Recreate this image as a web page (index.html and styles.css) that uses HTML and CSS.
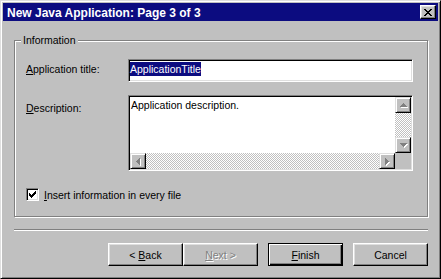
FILE: index.html
```html
<!DOCTYPE html>
<html>
<head>
<meta charset="utf-8">
<title>New Java Application</title>
<link rel="stylesheet" href="styles.css">
</head>
<body>
<div class="window">
  <div class="titlebar">
    <span class="title">New Java Application: Page 3 of 3</span>
    <span class="close-btn"><svg width="8" height="7" viewBox="0 0 8 7" shape-rendering="crispEdges"><path fill="#000" d="M0 0h2v1h-2zM6 0h2v1h-2zM1 1h2v1h-2zM5 1h2v1h-2zM2 2h4v1h-4zM3 3h2v1h-2zM2 4h4v1h-4zM1 5h2v1h-2zM5 5h2v1h-2zM0 6h2v1h-2zM6 6h2v1h-2z"/></svg></span>
  </div>
  <div class="dialog-body">
    <div class="group">
      <span class="group-label">Information</span>
      <div class="form-grid">
        <label class="field-label label-title"><u>A</u>pplication title:</label>
        <div class="edit"><span class="selection">ApplicationTitle</span></div>
        <label class="field-label label-desc"><u>D</u>escription:</label>
        <div class="memo">
          <div class="memo-text">Application description.</div>
          <div class="vscroll">
            <span class="sbtn"><svg width="7" height="4" viewBox="0 0 7 4" shape-rendering="crispEdges"><path fill="#808080" d="M3 0h1v1h-1zM2 1h3v1h-3zM1 2h5v1h-5zM0 3h7v1h-7z"/></svg></span>
            <span class="track"></span>
            <span class="sbtn"><svg width="7" height="4" viewBox="0 0 7 4" shape-rendering="crispEdges"><path fill="#808080" d="M0 0h7v1h-7zM1 1h5v1h-5zM2 2h3v1h-3zM3 3h1v1h-1z"/></svg></span>
          </div>
          <div class="hscroll">
            <span class="sbtn"><svg width="4" height="7" viewBox="0 0 4 7" shape-rendering="crispEdges"><path fill="#808080" d="M3 0h1v7h-1zM2 1h1v5h-1zM1 2h1v3h-1zM0 3h1v1h-1z"/></svg></span>
            <span class="track"></span>
            <span class="sbtn"><svg width="4" height="7" viewBox="0 0 4 7" shape-rendering="crispEdges"><path fill="#808080" d="M0 0h1v7h-1zM1 1h1v5h-1zM2 2h1v3h-1zM3 3h1v1h-1z"/></svg></span>
          </div>
          <div class="corner"></div>
        </div>
      </div>
      <div class="check-row">
        <span class="checkbox"><svg width="7" height="7" viewBox="0 0 7 7" shape-rendering="crispEdges"><path fill="#000" d="M0 2h1v3h-1zM1 3h1v3h-1zM2 4h1v3h-1zM3 3h1v3h-1zM4 2h1v3h-1zM5 1h1v3h-1zM6 0h1v3h-1z"/></svg></span>
        <span class="check-label"><u>I</u>nsert information in every file</span>
      </div>
    </div>
    <div class="separator"></div>
    <div class="buttons">
      <div class="nav-pair">
        <span class="btn">&lt; <u>B</u>ack</span>
        <span class="btn disabled"><u>N</u>ext &gt;</span>
      </div>
      <span class="btn default"><u>F</u>inish</span>
      <span class="btn">Cancel</span>
    </div>
  </div>
</div>
</body>
</html>
```
FILE: styles.css
```css
* { box-sizing: border-box; }
html, body { margin: 0; padding: 0; }
body {
  background: #c0c0c0;
  font-family: "Liberation Sans", Arial, sans-serif;
  font-size: 10.5px;
  color: #000;
}
.window {
  width: 441px;
  height: 279px;
  background: #c0c0c0;
  border: 1px solid;
  border-color: #dfdfdf #000 #000 #dfdfdf;
  box-shadow: inset 1px 1px #fff, inset -1px -1px #808080;
  padding: 2px;
  display: flex;
  flex-direction: column;
}
.titlebar {
  flex: none;
  height: 18px;
  background: #0c0c80;
  display: flex;
  align-items: center;
  justify-content: space-between;
  padding: 0 2px 0 4px;
}
.title {
  color: #fff;
  font-weight: bold;
  font-size: 12px;
  line-height: 14px;
  padding-top: 1px;
  white-space: nowrap;
}
.close-btn {
  width: 16px;
  height: 14px;
  background: #c0c0c0;
  border: 1px solid;
  border-color: #fff #000 #000 #fff;
  box-shadow: inset -1px -1px #808080, inset 1px 1px #dfdfdf;
  display: flex;
  align-items: center;
  justify-content: center;
}
.close-btn svg { display: block; }
.dialog-body {
  flex: 1;
  display: flex;
  flex-direction: column;
  padding: 19px 10px 10px 11px;
}
.group {
  position: relative;
  border: 1px solid #808080;
  box-shadow: 1px 1px 0 #fff, inset 1px 1px 0 #fff;
  padding: 18px 13px 15px 11px;
}
.group-label {
  position: absolute;
  top: -7px;
  left: 6px;
  padding: 0 2px;
  line-height: 12px;
  background: #c0c0c0;
}
.form-grid {
  display: grid;
  grid-template-columns: 102px 285px;
  grid-template-rows: 23px 76px;
  row-gap: 13px;
}
.field-label { line-height: 12px; }
.label-title { padding-top: 4px; }
.label-desc { padding-top: 7px; }
.edit, .memo, .checkbox {
  border: 1px solid;
  border-color: #808080 #fff #fff #808080;
  box-shadow: inset 1px 1px #000, inset -1px -1px #dfdfdf;
  background: #fff;
}
.edit {
  padding: 2px 1px;
  display: flex;
  align-items: flex-start;
}
.selection {
  background: #0c0c80;
  color: #fff;
  line-height: 14px;
}
.memo {
  padding: 1px;
  display: grid;
  grid-template-columns: 1fr 16px;
  grid-template-rows: 1fr 16px;
}
.memo-text {
  padding: 2px 1px;
  line-height: 12px;
}
.vscroll { display: flex; flex-direction: column; }
.hscroll { display: flex; }
.track {
  flex: 1;
  background-color: #fff;
  background-image: repeating-conic-gradient(#c0c0c0 0% 25%, #fff 0% 50%);
  background-size: 2px 2px;
}
.sbtn {
  flex: none;
  width: 16px;
  height: 16px;
  background: #c0c0c0;
  border: 1px solid;
  border-color: #dfdfdf #000 #000 #dfdfdf;
  box-shadow: inset 1px 1px #fff, inset -1px -1px #808080;
  display: flex;
  align-items: center;
  justify-content: center;
}
.sbtn svg { display: block; filter: drop-shadow(1px 1px 0 #fff); }
.corner { background: #c0c0c0; }
.check-row {
  margin-top: 17px;
  height: 13px;
  display: flex;
  align-items: center;
  gap: 5px;
}
.checkbox {
  width: 13px;
  height: 13px;
  padding: 2px;
  display: flex;
}
.checkbox svg { display: block; }
.check-label { line-height: 12px; }
.separator {
  margin-top: 12px;
  height: 2px;
  border-top: 1px solid #808080;
  border-bottom: 1px solid #fff;
}
.buttons {
  margin-top: 12px;
  display: flex;
  justify-content: flex-end;
  gap: 10px;
}
.nav-pair { display: flex; }
.btn {
  width: 75px;
  height: 23px;
  border: 1px solid;
  border-color: #fff #000 #000 #fff;
  box-shadow: inset -1px -1px #808080, inset 1px 1px #dfdfdf;
  display: flex;
  align-items: center;
  justify-content: center;
  white-space: pre;
  line-height: 12px;
}
.btn.default {
  border-color: #000;
  box-shadow: inset 1px 1px #fff, inset -1px -1px #000, inset -2px -2px #808080;
}
.btn.disabled {
  color: #808080;
  text-shadow: 1px 1px 0 #fff;
}
```
